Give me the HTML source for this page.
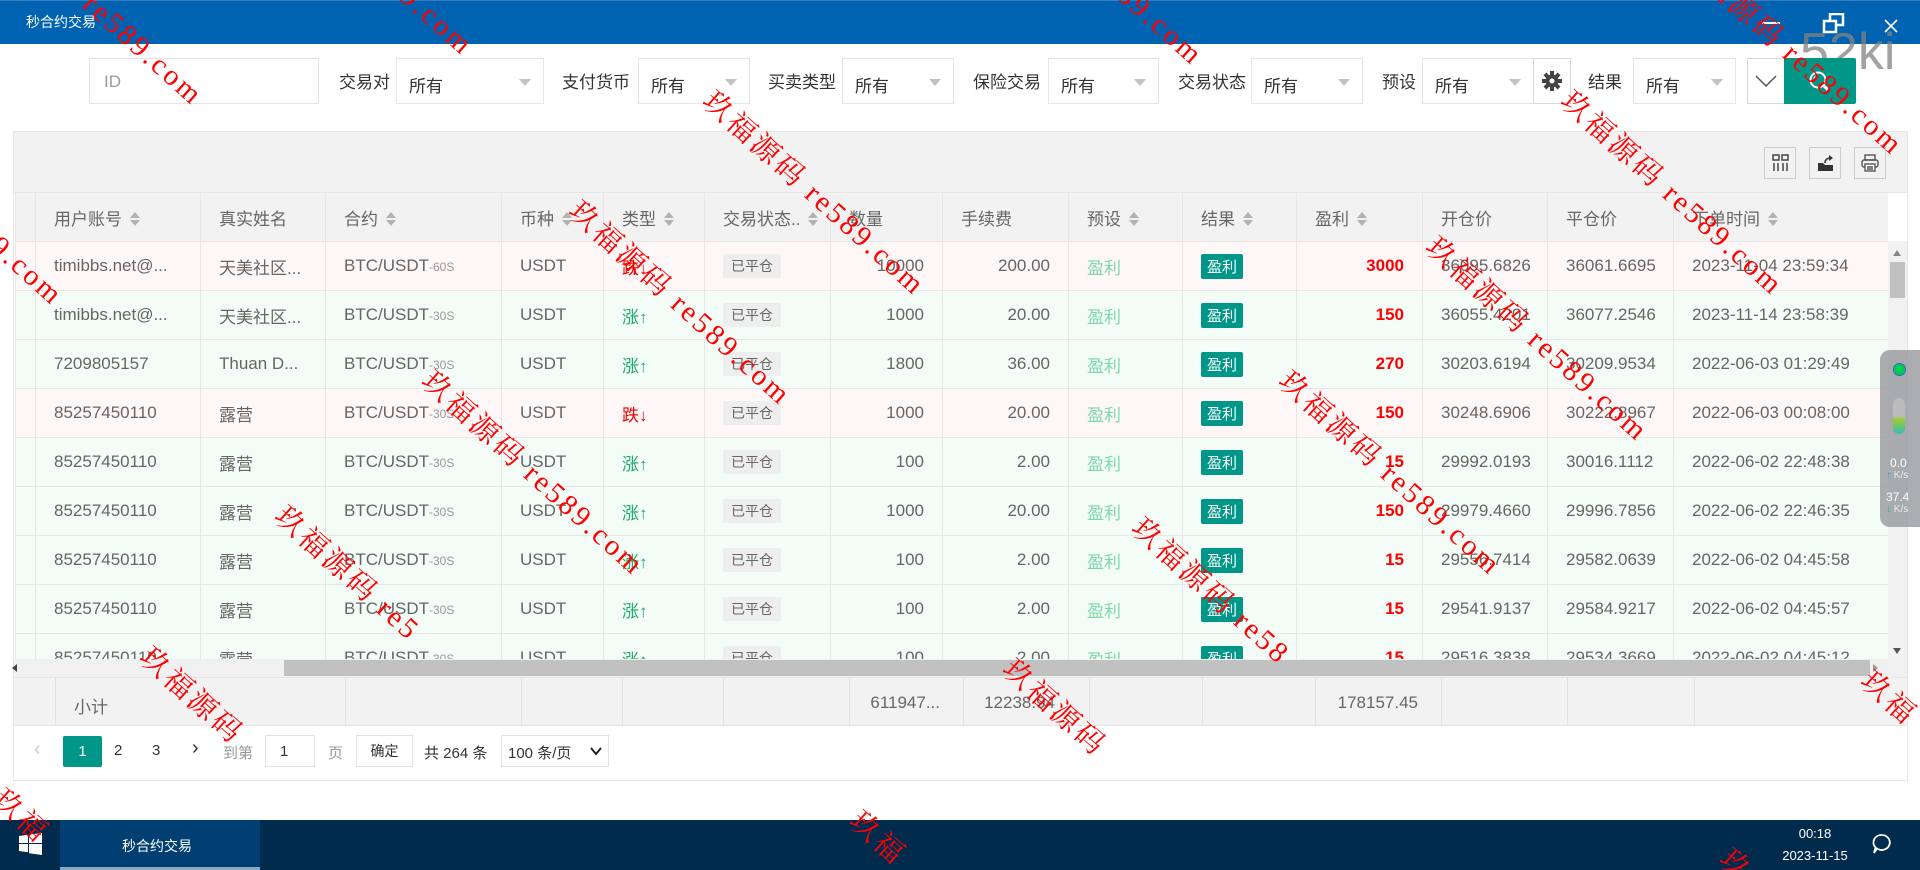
<!DOCTYPE html>
<html style="width:1920px;height:870px;overflow:hidden"><head><meta charset="utf-8"><style>
*{box-sizing:border-box;margin:0;padding:0}
body{width:1920px;height:870px;overflow:hidden;background:#fff;font-family:"Liberation Sans","Noto Sans CJK SC",sans-serif;color:#666;position:relative}
.abs{position:absolute}
.title{left:0;top:0;width:1920px;height:44px;background:#0063b1;border-top:1px solid #3a7bb8}
.lbl{font-size:17px;color:#333;top:68px}
.sel{top:58px;height:46px;border:1px solid #e6e6e6;background:#fff;font-size:17px;color:#333;padding:13px 0 0 12px}
.sel:after{content:"";position:absolute;right:12px;top:20px;border:6px solid transparent;border-top:7px solid #c2c2c2}
.inp{top:58px;height:46px;border:1px solid #e6e6e6;background:#fff;font-size:17px;color:#999;padding:13px 0 0 14px}
table{border-collapse:collapse;table-layout:fixed;font-size:17px}
td{height:49px;border:1px solid #e6e6e6;padding:0 18px;white-space:nowrap;overflow:hidden;color:#666}
thead td{background:#f2f2f2;color:#666}
.r{text-align:right}
.dn td{background:#fdf7f7}
.up td{background:#f3fcf6}
.srt{display:inline-block;width:10px;height:14px;position:relative;margin-left:8px;vertical-align:-1px}
.srt:before{content:"";position:absolute;left:0;top:0;border:5px solid transparent;border-bottom:6px solid #b2b2b2;border-top:0}
.srt:after{content:"";position:absolute;left:0;bottom:0;border:5px solid transparent;border-top:6px solid #b2b2b2;border-bottom:0}
.sm{font-size:12px;color:#999}
.g{color:#1aab6b}.rd{color:#e00}
.bdg{display:inline-block;background:#eee;color:#666;font-size:14px;padding:2px 8px;border-radius:2px}
.ok{display:inline-block;background:#009688;color:#fff;font-size:15px;padding:2px 6px;border-radius:2px}
.ps{color:#7dd9a8}
.pf{color:#f00;font-weight:bold}
.tb{width:32px;height:32px;border:1px solid #ccc;top:147px}
#wmw{position:absolute;left:0;top:0;width:1920px;height:870px;overflow:hidden;pointer-events:none;clip-path:inset(0)}
.wm{position:absolute;color:#f00;font-family:"Liberation Serif","Noto Serif CJK SC",serif;font-size:29px;letter-spacing:3px;transform:rotate(42deg);transform-origin:0 0;white-space:nowrap}
</style></head><body>
<div class="abs title"></div>
<div class="abs" style="left:26px;top:12px;color:#fff;font-size:14px">秒合约交易</div>
<div class="abs" style="left:1762px;top:22px;width:18px;height:2px;background:#fff"></div>
<svg class="abs" style="left:1822px;top:13px" width="24" height="22"><rect x="8" y="1" width="13" height="11" fill="none" stroke="#fff" stroke-width="2.5"/><rect x="2" y="8" width="12" height="11" fill="#0063b1" stroke="#fff" stroke-width="2.5"/></svg>
<svg class="abs" style="left:1884px;top:19px" width="14" height="14"><path d="M1 1L13 13M13 1L1 13" stroke="#fff" stroke-width="1.6"/></svg>
<div class="abs" style="left:1800px;top:22px;font-size:52px;color:rgba(130,130,130,.75)">52ki</div>

<div class="abs inp" style="left:89px;width:230px">ID</div>
<div class="abs lbl" style="left:339px">交易对</div><div class="abs sel" style="left:396px;width:148px">所有</div>
<div class="abs lbl" style="left:562px">支付货币</div><div class="abs sel" style="left:638px;width:112px">所有</div>
<div class="abs lbl" style="left:768px">买卖类型</div><div class="abs sel" style="left:842px;width:112px">所有</div>
<div class="abs lbl" style="left:973px">保险交易</div><div class="abs sel" style="left:1048px;width:111px">所有</div>
<div class="abs lbl" style="left:1178px">交易状态</div><div class="abs sel" style="left:1251px;width:112px">所有</div>
<div class="abs lbl" style="left:1382px">预设</div><div class="abs sel" style="left:1422px;width:112px">所有</div>
<div class="abs" style="left:1533px;top:58px;width:38px;height:46px;border:1px solid #d8d8d8;background:#fff"></div>
<svg class="abs" style="left:1542px;top:71px" width="20" height="20" viewBox="0 0 20 20"><g fill="#444"><circle cx="10" cy="10" r="6.5"/><rect x="8" y="0" width="4" height="20"/><rect x="0" y="8" width="20" height="4"/><rect x="8" y="0" width="4" height="20" transform="rotate(45 10 10)"/><rect x="8" y="0" width="4" height="20" transform="rotate(-45 10 10)"/></g><circle cx="10" cy="10" r="2.5" fill="#fff"/></svg>
<div class="abs lbl" style="left:1588px">结果</div><div class="abs sel" style="left:1633px;width:103px">所有</div>
<div class="abs" style="left:1747px;top:58px;width:38px;height:46px;border:1px solid #d8d8d8;background:#fff"></div>
<svg class="abs" style="left:1755px;top:74px" width="22" height="14"><path d="M1 2L11 12L21 2" fill="none" stroke="#555" stroke-width="1.5"/></svg>
<div class="abs" style="left:1784px;top:58px;width:72px;height:46px;background:#009688;border-radius:0 2px 2px 0"></div>
<svg class="abs" style="left:1808px;top:70px" width="24" height="24"><circle cx="10" cy="10" r="7.5" fill="none" stroke="#fff" stroke-width="2"/><path d="M15 15L21 21" stroke="#fff" stroke-width="3"/><path d="M6 9a4 4 0 0 1 3-3" stroke="#fff" fill="none" stroke-width="1.5"/></svg>

<div class="abs" style="left:13px;top:131px;width:1895px;height:650px;border:1px solid #e6e6e6;background:#fff"></div>
<div class="abs" style="left:14px;top:132px;width:1893px;height:61px;background:#f2f2f2;border-bottom:1px solid #e6e6e6"></div>
<div class="abs tb" style="left:1764px"></div><div class="abs tb" style="left:1809px"></div><div class="abs tb" style="left:1854px"></div>
<svg class="abs" style="left:1772px;top:154px" width="18" height="18"><g fill="none" stroke="#444" stroke-width="1.5"><rect x="1" y="1" width="6" height="5"/><rect x="10" y="1" width="6" height="5"/><path d="M2 9v8M6 9v8M11 9v8M15 9v8"/></g></svg>
<svg class="abs" style="left:1817px;top:154px" width="18" height="18"><path d="M1 9h5l2 2h8v6H1z" fill="#333"/><path d="M8 9c0-4 3-5 6-5" fill="none" stroke="#333" stroke-width="1.6"/><path d="M12 1l4 3-4 3z" fill="#333"/></svg>
<svg class="abs" style="left:1861px;top:154px" width="18" height="18"><g fill="none" stroke="#555" stroke-width="1.4"><rect x="4" y="1" width="10" height="5"/><rect x="1" y="6" width="16" height="7" rx="2"/><rect x="4" y="10" width="10" height="7" fill="#fff"/><path d="M6 13h6M6 15h6"/></g></svg>

<div class="abs" style="left:14px;top:192px;width:1874px;height:467px;overflow:hidden">
<table style="width:1873px;margin-left:1px">
<colgroup><col style="width:20px"><col style="width:165px"><col style="width:125px"><col style="width:176px"><col style="width:102px"><col style="width:101px"><col style="width:126px"><col style="width:112px"><col style="width:126px"><col style="width:114px"><col style="width:114px"><col style="width:126px"><col style="width:125px"><col style="width:126px"><col style="width:215px"></colgroup>
<thead><tr><td></td><td>用户账号<i class="srt"></i></td><td>真实姓名</td><td>合约<i class="srt"></i></td><td>币种<i class="srt"></i></td><td>类型<i class="srt"></i></td><td>交易状态..<i class="srt"></i></td><td>数量</td><td>手续费</td><td>预设<i class="srt"></i></td><td>结果<i class="srt"></i></td><td>盈利<i class="srt"></i></td><td>开仓价</td><td>平仓价</td><td>下单时间<i class="srt"></i></td></tr></thead>
<tbody>
<tr class="dn"><td></td><td>timibbs.net@...</td><td>天美社区...</td><td>BTC/USDT<span class="sm">-60S</span></td><td>USDT</td><td class="rd">跌↓</td><td><span class="bdg">已平仓</span></td><td class="r">10000</td><td class="r">200.00</td><td class="ps">盈利</td><td><span class="ok">盈利</span></td><td class="r pf">3000</td><td>36095.6826</td><td>36061.6695</td><td>2023-11-04 23:59:34</td></tr>
<tr class="up"><td></td><td>timibbs.net@...</td><td>天美社区...</td><td>BTC/USDT<span class="sm">-30S</span></td><td>USDT</td><td class="g">涨↑</td><td><span class="bdg">已平仓</span></td><td class="r">1000</td><td class="r">20.00</td><td class="ps">盈利</td><td><span class="ok">盈利</span></td><td class="r pf">150</td><td>36055.4201</td><td>36077.2546</td><td>2023-11-14 23:58:39</td></tr>
<tr class="up"><td></td><td>7209805157</td><td>Thuan D...</td><td>BTC/USDT<span class="sm">-30S</span></td><td>USDT</td><td class="g">涨↑</td><td><span class="bdg">已平仓</span></td><td class="r">1800</td><td class="r">36.00</td><td class="ps">盈利</td><td><span class="ok">盈利</span></td><td class="r pf">270</td><td>30203.6194</td><td>30209.9534</td><td>2022-06-03 01:29:49</td></tr>
<tr class="dn"><td></td><td>85257450110</td><td>露营</td><td>BTC/USDT<span class="sm">-30S</span></td><td>USDT</td><td class="rd">跌↓</td><td><span class="bdg">已平仓</span></td><td class="r">1000</td><td class="r">20.00</td><td class="ps">盈利</td><td><span class="ok">盈利</span></td><td class="r pf">150</td><td>30248.6906</td><td>30222.8967</td><td>2022-06-03 00:08:00</td></tr>
<tr class="up"><td></td><td>85257450110</td><td>露营</td><td>BTC/USDT<span class="sm">-30S</span></td><td>USDT</td><td class="g">涨↑</td><td><span class="bdg">已平仓</span></td><td class="r">100</td><td class="r">2.00</td><td class="ps">盈利</td><td><span class="ok">盈利</span></td><td class="r pf">15</td><td>29992.0193</td><td>30016.1112</td><td>2022-06-02 22:48:38</td></tr>
<tr class="up"><td></td><td>85257450110</td><td>露营</td><td>BTC/USDT<span class="sm">-30S</span></td><td>USDT</td><td class="g">涨↑</td><td><span class="bdg">已平仓</span></td><td class="r">1000</td><td class="r">20.00</td><td class="ps">盈利</td><td><span class="ok">盈利</span></td><td class="r pf">150</td><td>29979.4660</td><td>29996.7856</td><td>2022-06-02 22:46:35</td></tr>
<tr class="up"><td></td><td>85257450110</td><td>露营</td><td>BTC/USDT<span class="sm">-30S</span></td><td>USDT</td><td class="g">涨↑</td><td><span class="bdg">已平仓</span></td><td class="r">100</td><td class="r">2.00</td><td class="ps">盈利</td><td><span class="ok">盈利</span></td><td class="r pf">15</td><td>29556.7414</td><td>29582.0639</td><td>2022-06-02 04:45:58</td></tr>
<tr class="up"><td></td><td>85257450110</td><td>露营</td><td>BTC/USDT<span class="sm">-30S</span></td><td>USDT</td><td class="g">涨↑</td><td><span class="bdg">已平仓</span></td><td class="r">100</td><td class="r">2.00</td><td class="ps">盈利</td><td><span class="ok">盈利</span></td><td class="r pf">15</td><td>29541.9137</td><td>29584.9217</td><td>2022-06-02 04:45:57</td></tr>
<tr class="up"><td></td><td>85257450110</td><td>露营</td><td>BTC/USDT<span class="sm">-30S</span></td><td>USDT</td><td class="g">涨↑</td><td><span class="bdg">已平仓</span></td><td class="r">100</td><td class="r">2.00</td><td class="ps">盈利</td><td><span class="ok">盈利</span></td><td class="r pf">15</td><td>29516.3838</td><td>29534.3669</td><td>2022-06-02 04:45:12</td></tr>
</tbody></table></div>
<div class="abs" style="left:1888px;top:241px;width:19px;height:418px;background:#f1f1f1"></div>
<div class="abs" style="left:1893px;top:250px;border:4px solid transparent;border-bottom:6px solid #888;border-top:0"></div>
<div class="abs" style="left:1890px;top:262px;width:15px;height:36px;background:#c1c1c1"></div>
<div class="abs" style="left:1893px;top:648px;border:4px solid transparent;border-top:6px solid #555;border-bottom:0"></div>
<div class="abs" style="left:14px;top:659px;width:1893px;height:18px;background:#f1f1f1"></div>
<div class="abs" style="left:284px;top:660px;width:1586px;height:16px;background:#c1c1c1"></div>
<div class="abs" style="left:12px;top:664px;border:4px solid transparent;border-right:5px solid #444;border-left:0"></div>
<div class="abs" style="left:1873px;top:664px;border:4px solid transparent;border-left:5px solid #999;border-right:0"></div>
<div class="abs" style="left:14px;top:677px;width:1893px;height:49px;background:#f2f2f2;border-top:1px solid #e6e6e6;border-bottom:1px solid #e6e6e6"></div>
<div class="abs" style="left:55px;top:677px;width:1px;height:49px;background:#e2e2e2;box-shadow:290px 0 #e2e2e2,466px 0 #e2e2e2,567px 0 #e2e2e2,668px 0 #e2e2e2,794px 0 #e2e2e2,908px 0 #e2e2e2,1034px 0 #e2e2e2,1147px 0 #e2e2e2,1260px 0 #e2e2e2,1386px 0 #e2e2e2,1512px 0 #e2e2e2,1639px 0 #e2e2e2"></div>
<div class="abs" style="left:74px;top:693px;font-size:17px">小计</div>
<div class="abs" style="left:850px;top:693px;font-size:17px;width:90px;text-align:right">611947...</div>
<div class="abs" style="left:960px;top:693px;font-size:17px;width:95px;text-align:right">12238.94</div>
<div class="abs" style="left:1310px;top:693px;font-size:17px;width:108px;text-align:right">178157.45</div>
<div class="abs" style="left:34px;top:738px;font-size:20px;color:#ccc">‹</div>
<div class="abs" style="left:63px;top:736px;width:39px;height:31px;background:#009688;border-radius:2px;color:#fff;font-size:15px;text-align:center;line-height:31px">1</div>
<div class="abs" style="left:114px;top:742px;font-size:15px;color:#333">2</div>
<div class="abs" style="left:152px;top:742px;font-size:15px;color:#333">3</div>
<div class="abs" style="left:192px;top:737px;font-size:20px;color:#333">›</div>
<div class="abs" style="left:223px;top:742px;font-size:15px;color:#999">到第</div>
<div class="abs" style="left:265px;top:735px;width:50px;height:32px;border:1px solid #e2e2e2;font-size:15px;color:#333;padding:7px 0 0 14px">1</div>
<div class="abs" style="left:328px;top:742px;font-size:15px;color:#999">页</div>
<div class="abs" style="left:356px;top:735px;width:57px;height:32px;border:1px solid #e2e2e2;font-size:14px;color:#333;text-align:center;line-height:30px">确定</div>
<div class="abs" style="left:424px;top:742px;font-size:15px;color:#333">共 264 条</div>
<div class="abs" style="left:501px;top:735px;width:108px;height:32px;border:1px solid #e2e2e2;font-size:15px;color:#333;padding:6px 0 0 6px">100 条/页</div>
<svg class="abs" style="left:590px;top:747px" width="12" height="9"><path d="M1 1l5 6 5-6" fill="none" stroke="#222" stroke-width="2"/></svg>

<div class="abs" style="left:1880px;top:350px;width:40px;height:177px;background:rgba(150,152,156,.8);border-radius:10px 0 0 10px"></div>
<div class="abs" style="left:1893px;top:363px;width:13px;height:13px;border-radius:50%;background:#0c5;border:1px solid #36c"></div>
<div class="abs" style="left:1893px;top:398px;width:12px;height:36px;border-radius:6px;background:linear-gradient(#bbb 0,#bbb 50%,#9c3 60%,#3bb 100%)"></div>
<div class="abs" style="left:1890px;top:456px;font-size:12px;color:#fff">0.0</div>
<div class="abs" style="left:1886px;top:470px;font-size:10px;color:#eee"><span style="color:#29f">↑</span> K/s</div>
<div class="abs" style="left:1886px;top:490px;font-size:12px;color:#fff">37.4</div>
<div class="abs" style="left:1886px;top:504px;font-size:10px;color:#eee"><span style="color:#1b6">↓</span> K/s</div>

<div class="abs" style="left:0;top:820px;width:1920px;height:50px;background:#012b4d"></div>
<div class="abs" style="left:60px;top:820px;width:200px;height:50px;background:#013f72;border-bottom:3px solid #8aa9c4"></div>
<svg class="abs" style="left:19px;top:833px" width="23" height="22"><path d="M0 3l9-1.3V10H0zM10 1.5L23 0v10H10zM0 11h9v8.3L0 18zM10 11h13v11l-13-1.8z" fill="#fff"/></svg>
<div class="abs" style="left:122px;top:836px;color:#fff;font-size:14px">秒合约交易</div>
<div class="abs" style="left:1790px;top:826px;color:#fff;font-size:13px;width:50px;text-align:center">00:18</div>
<div class="abs" style="left:1775px;top:848px;color:#fff;font-size:13px;width:80px;text-align:center">2023-11-15</div>
<svg class="abs" style="left:1870px;top:832px" width="24" height="24"><path d="M12 3a8 7.5 0 1 1-5 13.5L4 21l1.5-5.5A8 7.5 0 0 1 12 3z" fill="none" stroke="#fff" stroke-width="1.8"/></svg>

<div id="wmw">
<div class="wm" style="left:0px;top:-110px">玖福源码 re589.com</div>
<div class="wm" style="left:270px;top:-160px">玖福源码 re589.com</div>
<div class="wm" style="left:722px;top:80px">玖福源码 re589.com</div>
<div class="wm" style="left:588px;top:190px">玖福源码 re589.com</div>
<div class="wm" style="left:441px;top:360px">玖福源码 re589.com</div>
<div class="wm" style="left:294px;top:495px">玖福源码 re5</div>
<div class="wm" style="left:159px;top:636px">玖福源码</div>
<div class="wm" style="left:12px;top:778px">玖福</div>
<div class="wm" style="left:-140px;top:90px">玖福源码 re589.com</div>
<div class="wm" style="left:1022px;top:648px">玖福源码</div>
<div class="wm" style="left:1298px;top:360px">玖福源码 re589.com</div>
<div class="wm" style="left:1151px;top:507px">玖福源码 re58</div>
<div class="wm" style="left:1445px;top:226px">玖福源码 re589.com</div>
<div class="wm" style="left:1580px;top:80px">玖福源码 re589.com</div>
<div class="wm" style="left:869px;top:800px">玖福</div>
<div class="wm" style="left:1739px;top:838px">玖</div>
<div class="wm" style="left:1880px;top:660px">玖福</div>
<div class="wm" style="left:1000px;top:-150px">玖福源码 re589.com</div>
<div class="wm" style="left:1700px;top:-60px">玖福源码 re589.com</div>
</div>
</body></html>
